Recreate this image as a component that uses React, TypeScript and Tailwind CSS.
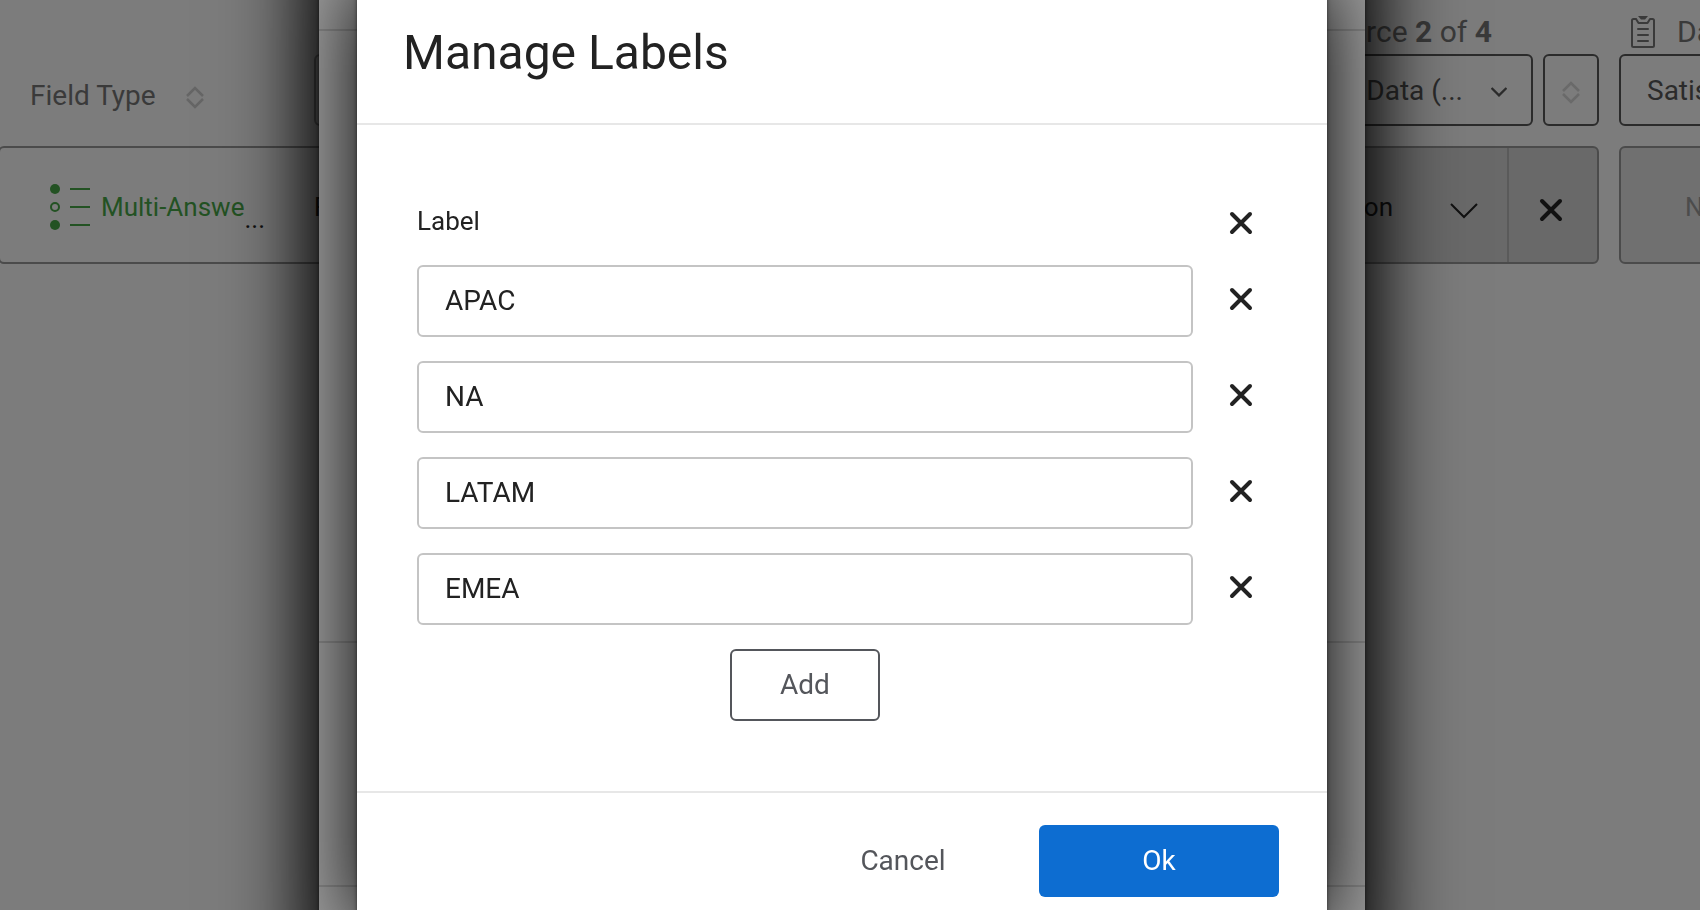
import React, { useState } from 'react';

const INITIAL_LABELS = ['APAC', 'NA', 'LATAM', 'EMEA'];

const CloseIcon = () => (
  <svg className="w-6 h-6" viewBox="0 0 24 24" fill="none" stroke="currentColor" strokeWidth="4" strokeLinecap="round">
    <path d="M3 3l18 18M21 3L3 21" />
  </svg>
);

const SortIcon = () => (
  <svg className="w-[18px] h-6 shrink-0" viewBox="0 0 18 24" fill="none" stroke="currentColor" strokeWidth="2.500">
    <path d="M1 11l8-8 8 8M1 14l8 8 8-8" />
  </svg>
);

const ChevronIcon = ({ className }: { className: string }) => (
  <svg className={className} viewBox="0 0 28 16" fill="none" stroke="currentColor">
    <path d="M1 1l13 13L27 1" />
  </svg>
);

const ClipboardIcon = () => (
  <svg className="w-6 h-8 shrink-0" viewBox="0 0 24 32" fill="none" stroke="currentColor" strokeWidth="2" strokeLinecap="round" strokeLinejoin="round">
    <path d="M5 3H2.500Q1 3 1 4.500V29.500Q1 31 2.500 31H21.500Q23 31 23 29.500V4.500Q23 3 21.500 3H19L16.500 7H7.500L5 3" />
    <path d="M7 0H17L14 3.500H10Z" fill="currentColor" stroke="none" />
    <path d="M7 13h10M7 19h10M7 25h10" />
  </svg>
);

const MultiAnswerIcon = () => (
  <svg className="w-10 h-12 shrink-0" viewBox="0 0 40 48" fill="none" stroke="currentColor" strokeWidth="2">
    <circle cx="5" cy="6" r="5" fill="currentColor" stroke="none" />
    <circle cx="5" cy="24" r="4" />
    <circle cx="5" cy="42" r="5" fill="currentColor" stroke="none" />
    <path d="M20 6h20M20 24h20M20 42h20" />
  </svg>
);

const FieldColumn = () => (
  <section className="flex-1 min-w-0 -ml-0.5">
    <div className="flex h-[146px] pt-[54px] pl-8">
      <div className="flex items-center h-[72px] w-[284px] shrink-0 pt-3 gap-[30px] text-[28px] text-[#3a3a3a]">
        Field Type
        <button aria-label="Sort by field type" className="pt-0.5 text-[#666]"><SortIcon /></button>
      </div>
      <button aria-label="First source" className="flex-1 h-[72px] border-2 border-[#505050] rounded-md" />
    </div>
    <div className="flex items-center h-[118px] border-2 border-[#4b4b4b] rounded-md pt-1 pl-[50px] text-[26px] text-[#111]">
      <div className="flex items-center h-16 w-[264px] shrink-0 text-[#235223]">
        <MultiAnswerIcon />
        <span className="pl-[11px]">Multi-Answe</span>
        <span className="self-end text-[#111]">...</span>
      </div>
      <span>Region</span>
    </div>
  </section>
);

const SourceColumn = () => (
  <section className="w-[400px] shrink-0">
    <div className="flex items-center h-[54px] pt-[10px] pl-[46px] text-3xl text-[#3a3a3a] whitespace-pre">
      Data Source <b className="font-bold">2</b> of <b className="font-bold">4</b>
    </div>
    <div className="flex gap-[10px] h-[92px]">
      <button className="flex items-center justify-end gap-7 flex-1 h-[72px] pr-6 pt-0.5 border-2 border-[#2b2b2b] rounded-md text-[28px] text-[#2b2b2b]">
        Employee Data (...
        <ChevronIcon className="w-4 h-[10px] mt-0.5 stroke-[4]" />
      </button>
      <button aria-label="Sort by source" className="flex items-center justify-center w-14 h-[72px] pt-1 border-2 border-[#2b2b2b] rounded-md text-[#6a6a6a]">
        <SortIcon />
      </button>
    </div>
    <div className="flex h-[118px] border-2 border-[#4b4b4b] rounded-md bg-[#696969] text-[#111]">
      <button className="flex items-center justify-end gap-[57px] flex-1 pr-[29px] pt-1 text-[26px]">
        Question
        <ChevronIcon className="w-7 h-4 mt-2 stroke-2" />
      </button>
      <button aria-label="Clear source" className="flex items-center justify-center w-[90px] pr-1 pt-[10px] border-l-2 border-[#5a5a5a]">
        <CloseIcon />
      </button>
    </div>
  </section>
);

const NextSourceColumn = () => (
  <section className="w-[81px] shrink-0 overflow-hidden whitespace-nowrap">
    <div className="flex items-center gap-[22px] h-[54px] pt-[10px] pl-3 text-3xl text-[#3a3a3a]">
      <ClipboardIcon />
      Data Source
    </div>
    <div className="h-[92px]">
      <button className="w-[300px] h-[72px] pl-[26px] pt-0.5 text-left border-2 border-[#2b2b2b] rounded-md text-[28px] text-[#2b2b2b]">
        Satisfaction
      </button>
    </div>
    <button className="w-[300px] h-[118px] pl-16 pt-1 text-left border-2 border-[#4b4b4b] rounded-md bg-[#707070] text-[26px] text-[#4c4c4c]">
      No field
    </button>
  </section>
);

const App: React.FC = () => {
  const [labels, setLabels] = useState<string[]>(INITIAL_LABELS);

  const updateLabel = (index: number, value: string) => {
    setLabels(prev => prev.map((label, i) => (i === index ? value : label)));
  };

  const removeLabel = (index: number) => {
    setLabels(prev => prev.filter((_, i) => i !== index));
  };

  return (
    <div className="h-screen overflow-hidden bg-[#7c7c7c] font-['Roboto',sans-serif]">
      <main className="flex gap-5">
        <FieldColumn />
        <SourceColumn />
        <NextSourceColumn />
      </main>

      {/* Parent dialog, dimmed behind the label editor */}
      <div className="fixed inset-0 pr-4 flex items-center justify-center overflow-hidden">
        <div className="shrink-0 w-full max-w-[1046px] bg-[#9f9f9f] shadow-[0_0_80px_10px_#000,0_0_4px_#0008]">
          <div className="h-[145px] border-b-2 border-[#8a8a8a]" />
          <div className="h-[612px] border-b-2 border-[#8a8a8a]" />
          <div className="h-[244px] border-b-2 border-[#8a8a8a]" />
          <div className="h-[137px]" />
        </div>
      </div>

      <div className="fixed inset-0 pr-4 flex items-center justify-center overflow-hidden">
        <div role="dialog" aria-labelledby="dialog-title" className="shrink-0 w-full max-w-[970px] bg-white text-[#222] shadow-[0_0_80px_#000,0_0_4px_#0008]">
          <header className="flex items-center h-36 pl-[46px] pt-0.5 border-b-2 border-[#e7e7e7]">
            <h1 id="dialog-title" className="text-5xl">Manage Labels</h1>
          </header>

          <div className="px-[60px] py-[70px]">
            <div className="flex items-center h-[70px] gap-[22px] pb-[14px]">
              <div id="label-heading" className="flex-1 pb-1 text-[26px]">Label</div>
              <button aria-label="Remove all labels" onClick={() => setLabels([])} className="flex items-center justify-center w-[52px] h-[52px]">
                <CloseIcon />
              </button>
            </div>
            <ul className="flex flex-col gap-6">
              {labels.map((label, i) => (
                <li key={i} className="flex gap-[22px]">
                  <input
                    aria-labelledby="label-heading"
                    value={label}
                    onChange={e => updateLabel(i, e.target.value)}
                    className="flex-1 min-w-0 h-[72px] px-[26px] pb-0.5 border-2 border-[#c4c4c4] rounded-md text-[28px] outline-none focus:border-[#0d6dd1]"
                  />
                  <button aria-label={`Remove ${label}`} onClick={() => removeLabel(i)} className="flex items-center justify-center w-[52px] pb-1">
                    <CloseIcon />
                  </button>
                </li>
              ))}
            </ul>
            <div className="flex justify-center pt-6 pr-[74px]">
              <button
                onClick={() => setLabels(prev => [...prev, ''])}
                className="w-[150px] h-[72px] border-2 border-[#54565b] rounded-md text-[28px] text-[#54565b]"
              >
                Add
              </button>
            </div>
          </div>

          <footer className="flex justify-end gap-4 px-12 py-8 border-t-2 border-[#e7e7e7] text-[28px]">
            <button className="w-60 h-[72px] text-[#54565b]">Cancel</button>
            <button className="w-60 h-[72px] rounded-md bg-[#0d6dd1] text-white">Ok</button>
          </footer>
        </div>
      </div>
    </div>
  );
};

export default App;
